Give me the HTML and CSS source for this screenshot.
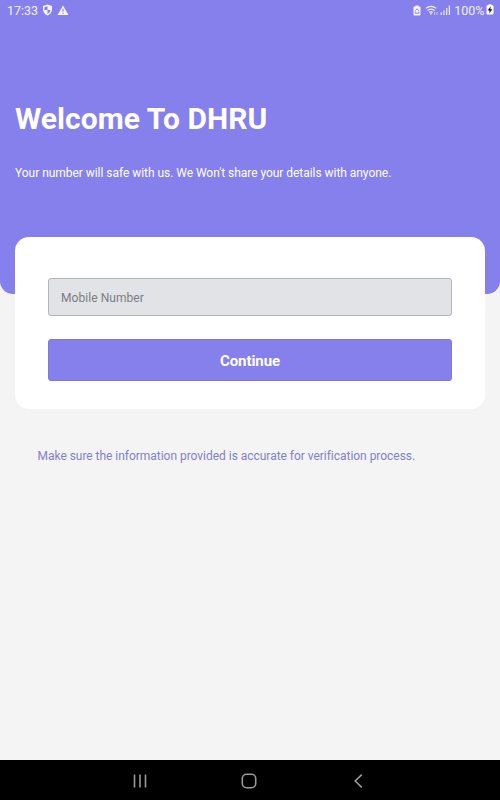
FILE: index.html
```html
<!DOCTYPE html>
<html lang="en">
<head>
<meta charset="utf-8">
<meta name="viewport" content="width=device-width">
<title>Welcome To DHRU</title>
<link rel="stylesheet" href="styles.css">
</head>
<body>
<div class="screen">
  <header class="hero">
    <div class="status">
      <span class="clock">17:33</span>
      <svg class="shield" width="11" height="12" viewBox="0 0 11 12"><path d="M5.500.5 10 2v3.600c0 2.600-1.800 4.800-4.500 5.900C2.800 10.400 1 8.200 1 5.600V2z" fill="#f5f4ff"/><path d="M5.500 2.200V6H2.400V3.200zM5.500 6h3.100c-.3 1.800-1.500 3.200-3.100 4z" fill="#8580e8"/></svg>
      <svg class="warning" width="12" height="11" viewBox="0 0 12 11"><path d="M6 .5 11.500 10H.5z" fill="#f5f4ff"/><path d="M6 3.700v3M6 7.800v1.100" stroke="#8580e8" stroke-width="1.100"/></svg>
      <span class="spacer"></span>
      <svg class="saver" width="8" height="11" viewBox="0 0 8 11"><path d="M2.500.5h3v1h1q1 0 1 1v7q0 1-1 1h-5q-1 0-1-1v-7q0-1 1-1h1z" fill="#f5f4ff"/><path d="M2.300 5.700 4 3.800l1.700 1.900M2.200 6.500v1.700h3.600V6.500" fill="none" stroke="#8580e8"/></svg>
      <svg class="wifi" width="14" height="11" viewBox="0 0 14 11"><path d="M.8 3.400Q6 -.8 11.200 3.400M2.500 5.500Q6 2.600 9.500 5.500M4.300 7.500Q6 6.100 7.700 7.500" fill="none" stroke="#f5f4ff" stroke-width="1.200"/><path d="m4.800 8.600 1.200 1.500 1.200-1.500Q6 7.700 4.800 8.600z" fill="#f5f4ff"/><path d="M9.500 7v3M12 7v3" stroke="#dedcff" stroke-width=".8"/></svg>
      <svg class="signal" width="11" height="10" viewBox="0 0 11 10"><path d="M1.300 7.300V10M4 5.500V10M6.700 3V10M9.400.5V10" stroke="#e8e7ff" stroke-width="1.300"/></svg>
      <span class="percent">100%</span>
      <svg class="battery" width="8" height="11" viewBox="0 0 8 11"><path d="M2.500.3h3v1h1q1 0 1 1v7.200q0 1-1 1h-5q-1 0-1-1V2.300q0-1 1-1h1z" fill="#fff"/><path d="M4.700 2.300 1.600 6.400h2L3.200 9.500l3.200-4.300h-2z" fill="#17152d"/></svg>
    </div>
    <h1 class="title">Welcome To DHRU</h1>
    <p class="subtitle">Your number will safe with us. We Won't share your details with anyone.</p>
  </header>
  <main class="content">
    <form class="card">
      <input class="field" type="tel" placeholder="Mobile Number" aria-label="Mobile Number">
      <button class="continue" type="button">Continue</button>
    </form>
    <p class="note">Make sure the information provided is accurate for verification process.</p>
  </main>
  <nav class="navbar">
    <svg width="16" height="16" viewBox="0 0 16 16"><path d="M2.500 1.500v13M8 1.500v13M13.500 1.500v13"/></svg>
    <svg width="16" height="16" viewBox="0 0 16 16"><rect x="1.300" y="1.300" width="13.400" height="13.400" rx="4.200"/></svg>
    <svg width="16" height="16" viewBox="0 0 16 16"><path d="M10.800 1.700 4.200 8l6.600 6.300"/></svg>
  </nav>
</div>
</body>
</html>
```
FILE: styles.css
```css
* { box-sizing: border-box; }
body { margin: 0; font-family: Roboto, "Liberation Sans", sans-serif; }
.screen { display: flex; flex-direction: column; height: 800px; background: #f4f4f4; overflow: hidden; }
.hero { flex: none; height: 294px; background: #8680ed; border-radius: 0 0 13px 13px; color: #fff; }
.status { display: flex; align-items: center; height: 20px; padding: 0 6.500px 0 7px; color: #f0efff; font-size: 12.500px; line-height: 20px; }
.status svg { flex: none; }
.clock, .percent { padding-top: 1px; }
.shield { margin-left: 4px; }
.warning { margin-left: 3.500px; }
.spacer { flex: 1; }
.wifi { margin-left: 4px; }
.signal { margin-left: 1px; }
.percent { margin-left: 3px; }
.battery { margin: -1px 0 0 1px; }
.title { margin: 81px 15px 0; font-size: 30px; line-height: 36px; font-weight: 700; letter-spacing: .06px; white-space: nowrap; }
.subtitle { margin: 28px 15px 0; font-size: 12px; line-height: 16px; letter-spacing: -.04px; white-space: nowrap; }
.content { flex: 1; margin-top: -57px; padding: 0 15px; }
.card { display: flex; flex-direction: column; gap: 23px; height: 172px; padding: 41px 33px 28px; background: #fff; border-radius: 14px; }
.field { width: 100%; height: 38px; padding: 1px 12px 0; border: 1px solid #b3b5b9; border-radius: 3px; background: #e1e3e7; font: 12px Roboto, sans-serif; letter-spacing: .06px; outline: 0; }
.field::placeholder { color: #7d7d82; opacity: 1; }
.continue { height: 42px; padding: 1px 0 0; border: 1px solid #7f7bd5; border-radius: 3px; background: #8580eb; color: #fff; font: 700 15px Roboto, sans-serif; letter-spacing: -.06px; }
.note { margin: 38px 0 0 22.500px; padding-top: 1px; color: #8580c9; font-size: 12px; line-height: 16px; letter-spacing: -.03px; white-space: nowrap; }
.navbar { flex: none; display: flex; justify-content: center; gap: 93.500px; height: 40px; padding: 1px 1.500px 0 0; align-items: center; background: #000; }
.navbar svg { fill: none; stroke: #999; stroke-width: 1.600; }
```
